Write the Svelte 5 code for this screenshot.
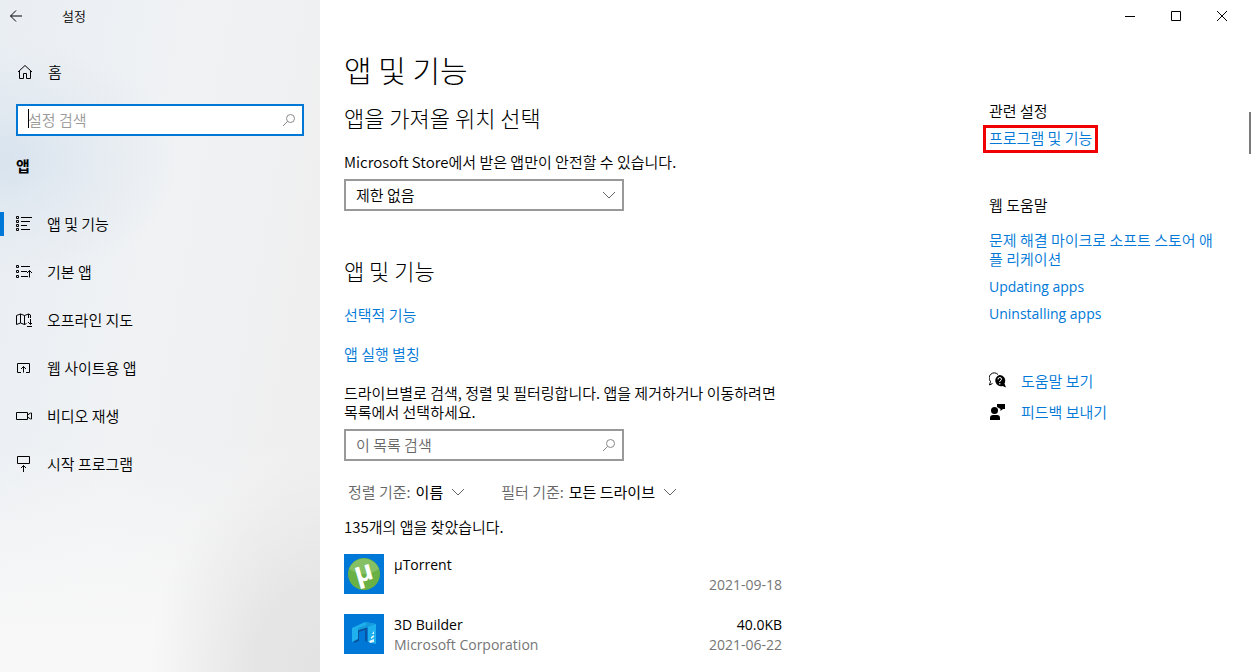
<script lang="ts">
  let settingQuery = $state('');
  let listQuery = $state('');
  let source = $state('제한 없음');
  let sortBy = $state('이름');
  let drive = $state('모든 드라이브');
  let current = $state('apps');

  const navItems = [
    { id: 'apps', label: '앱 및 기능' },
    { id: 'defaults', label: '기본 앱' },
    { id: 'maps', label: '오프라인 지도' },
    { id: 'websites', label: '웹 사이트용 앱' },
    { id: 'video', label: '비디오 재생' },
    { id: 'startup', label: '시작 프로그램' }
  ];

  const apps = [
    { id: 'utorrent', name: 'µTorrent', publisher: '', size: '', date: '2021-09-18' },
    { id: 'builder', name: '3D Builder', publisher: 'Microsoft Corporation', size: '40.0KB', date: '2021-06-22' }
  ];
</script>

{#snippet chevron()}
  <svg class="chevron" width="14" height="14" viewBox="0 0 14 14" aria-hidden="true">
    <path d="M1 4l6 6 6-6" />
  </svg>
{/snippet}

{#snippet magnifier()}
  <svg class="magnifier" width="14" height="14" viewBox="0 0 14 14" aria-hidden="true">
    <circle cx="8.5" cy="5.5" r="4" />
    <path d="M5.6 8.4L1 13" />
  </svg>
{/snippet}

<div class="window">
  <aside class="sidebar">
    <header class="titlebar">
      <button class="back" aria-label="뒤로">
        <svg width="14" height="14" viewBox="0 0 14 14"><path d="M13 7H1.5M7 1.5L1.5 7 7 12.5" /></svg>
      </button>
      <span>설정</span>
    </header>

    <a class="home" href="#home">
      <svg width="16" height="16" viewBox="0 0 16 16"><path d="M1 8l7-6.5L15 8M2.5 7v7.5h4V9.5h3v5h4V7" /></svg>
      <span>홈</span>
    </a>

    <div class="search">
      <input type="text" aria-label="설정 검색" placeholder="설정 검색" bind:value={settingQuery} />
      <span class="caret"></span>
      {@render magnifier()}
    </div>

    <h2 class="group">앱</h2>

    <nav>
      {#each navItems as item}
        <a href="#{item.id}" class:active={current === item.id} onclick={() => (current = item.id)}>
          <svg width="16" height="16" viewBox="0 0 16 16" aria-hidden="true">
            {#if item.id === 'apps'}
              <path d="M.5.5h2v2h-2zM.5 4.5h2v2h-2zM.5 8.5h2v2h-2zM.5 12.5h2v2h-2zM5 1.5h11M5 5.5h9M5 9.5h6M5 13.5h9" />
            {:else if item.id === 'defaults'}
              <path d="M.5 1.5h2v2h-2zM.5 6.5h2v2h-2zM.5 11.5h2v2h-2zM5 2.5h9M5 7.5h6M5 12.5h7M13.5 13.5v-7M11 9l2.5-2.5L16 9" />
            {:else if item.id === 'maps'}
              <path d="M.5 3.500l4-1.500 4 1.500 4-1.500 2 1v3M.5 3.500v9l4-1.500 4 1.500 2-1M4.500 2v9M8.500 3.500v9M12.500 2v4M14.500 7v5.500M12 10l2.500 2.500L16 11M11 14.500h5" />
            {:else if item.id === 'websites'}
              <path d="M5 12.5H1.5v-9h12v9H10M7.5 12.5v-6M5 9l2.5-2.5L10 9" />
            {:else if item.id === 'video'}
              <path d="M.5 4.5h11v7H.5zM11.5 7l3-2h1v6h-1l-3-2" />
            {:else}
              <path d="M1.5.5h12v7h-12zM7.5 16V9.5M5 12l2.5-2.5L10 12" />
            {/if}
          </svg>
          <span>{item.label}</span>
        </a>
      {/each}
    </nav>
  </aside>

  <div class="page">
    <header class="controls">
      <button aria-label="최소화"><svg width="12" height="12" viewBox="0 0 12 12"><path d="M1 6.5h10" /></svg></button>
      <button aria-label="최대화"><svg width="12" height="12" viewBox="0 0 12 12"><path d="M1.5 1.5h9v9h-9z" /></svg></button>
      <button aria-label="닫기"><svg width="12" height="12" viewBox="0 0 12 12"><path d="M1 1l10 10M11 1L1 11" /></svg></button>
    </header>

    <div class="columns">
      <main>
        <h1>앱 및 기능</h1>

        <section>
          <h2>앱을 가져올 위치 선택</h2>
          <label class="source-label" for="source">Microsoft Store에서 받은 앱만이 안전할 수 있습니다.</label>
          <div class="field">
            <select id="source" bind:value={source}>
              <option>제한 없음</option>
            </select>
            {@render chevron()}
          </div>
        </section>

        <section class="features">
          <h2>앱 및 기능</h2>
          <a class="option" href="#optional">선택적 기능</a>
          <a class="option" href="#aliases">앱 실행 별칭</a>
          <label class="hint" for="list-search">
            드라이브별로 검색, 정렬 및 필터링합니다. 앱을 제거하거나 이동하려면 목록에서 선택하세요.
          </label>
          <div class="field">
            <input id="list-search" type="text" placeholder="이 목록 검색" bind:value={listQuery} />
            {@render magnifier()}
          </div>

          <div class="filters">
            <label>
              정렬 기준:
              <select bind:value={sortBy}><option>이름</option></select>
              {@render chevron()}
            </label>
            <label>
              필터 기준:
              <select bind:value={drive}><option>모든 드라이브</option></select>
              {@render chevron()}
            </label>
          </div>

          <p class="count">135개의 앱을 찾았습니다.</p>

          <ul class="apps">
            {#each apps as app}
              <li>
                <svg class="logo" width="40" height="40" viewBox="0 0 40 40" aria-hidden="true">
                  <rect width="40" height="40" fill="#0078d7" />
                  {#if app.id === 'utorrent'}
                    <circle cx="20" cy="20" r="16" fill="#69b045" />
                    <path d="M5 15a16 16 0 0 1 30 0q-15 10-30 0z" fill="#85c064" />
                    <text x="20" y="27" text-anchor="middle" transform="rotate(-16 20 20)">µ</text>
                  {:else}
                    <path d="M9 15l13-4v16l-2-1V15l-6 2v9l-5 2z" fill="#0a55a0" transform="translate(1 1)" />
                    <path d="M8 14l13-6 11 2v20l-8-2V13l-10 3v9l-6 3z" fill="#1fb0ee" />
                    <path d="M21 8l11 2-8 3-10 3v-2l8-3z" fill="#159bdc" />
                    <path d="M25 27l5-2v3l-4 1zM27 23l3-2v2l-3 2zM28 20l2-3v3z" fill="#e4f6ff" />
                  {/if}
                </svg>
                <div class="info">
                  <span>{app.name}</span>
                  <span class="muted">{app.publisher}</span>
                </div>
                <div class="meta">
                  <span>{app.size}</span>
                  <span class="muted">{app.date}</span>
                </div>
              </li>
            {/each}
          </ul>
        </section>
      </main>

      <aside class="related">
        <h3>관련 설정</h3>
        <a class="marked" href="#programs">프로그램 및 기능</a>

        <h3 class="web">웹 도움말</h3>
        <a href="#troubleshoot">문제 해결 마이크로 소프트 스토어 애플 리케이션</a>
        <a class="latin" href="#updating">Updating apps</a>
        <a class="latin" href="#uninstalling">Uninstalling apps</a>

        <div class="support">
          <a href="#help">
            <svg width="18" height="18" viewBox="0 0 18 18" aria-hidden="true">
              <path d="M3.500 11.500L.5 13l1-3.500A5 5 0 0 1 9 2.500" fill="none" stroke="#000" />
              <path d="M10.500 3a5.700 5.700 0 0 1 5 8.500l1.500 4-3.500-1.500a5.700 5.700 0 1 1-3-11z" />
              <path d="M9 7.500q0-2 1.800-2t1.700 1.700q0 1-1.700 1.900V10M10.800 11v1.500" fill="none" stroke="#fff" />
            </svg>
            도움말 보기
          </a>
          <a href="#feedback">
            <svg width="18" height="18" viewBox="0 0 18 18" aria-hidden="true">
              <circle cx="5.500" cy="7.500" r="3.500" />
              <path d="M1 17v-2q0-3 3-3h4q3 0 3 3v2zM8 1h8v5h-2l-2.500 2V6L8 4z" />
            </svg>
            피드백 보내기
          </a>
        </div>
      </aside>
    </div>
    <div class="scrollbar"></div>
  </div>
</div>

<style>
  :global(body) {
    margin: 0;
    background: #fff;
  }

  .window {
    display: flex;
    min-height: 100vh;
    font: 350 15px/20px 'Noto Sans CJK KR', sans-serif;
    color: #000;
  }

  .window * {
    box-sizing: border-box;
  }

  h1, h2, h3, p, ul {
    margin: 0;
    padding: 0;
    font-weight: inherit;
  }

  a {
    color: #0078d7;
    text-decoration: none;
  }

  button, input, select {
    font: inherit;
    color: inherit;
    border: none;
    background: none;
    padding: 0;
    margin: 0;
    border-radius: 0;
    outline: none;
    appearance: none;
  }

  svg {
    flex: none;
  }

  /* Sidebar */
  .sidebar {
    width: 320px;
    flex: none;
    background:
      radial-gradient(ellipse 180px 120px at 0 160px, #d8e3ee, #d8e3ee80 40%, #d8e3ee00),
      radial-gradient(ellipse 170px 220px at 100% 100%, #e3e3e3, #e3e3e3e0 40%, #e3e3e300),
      linear-gradient(#f8f8f800 66%, #f8f8f8 94%),
      linear-gradient(100deg, #e9eef3 0%, #f0f2f4 45%, #efeeee 100%);
  }

  .sidebar svg, .controls svg {
    fill: none;
    stroke: #000;
  }

  .titlebar {
    display: flex;
    align-items: center;
    height: 32px;
    font-size: 13px;
  }

  .back {
    display: flex;
    width: 62px;
    padding-left: 9px;
  }

  .home {
    display: flex;
    align-items: center;
    gap: 15px;
    height: 48px;
    margin-top: 16px;
    padding-left: 17px;
    color: #000;
  }

  .search {
    position: relative;
    margin: 8px 16px 0;
  }

  .search input {
    display: block;
    width: 100%;
    height: 32px;
    padding: 0 32px 2px 10px;
    border: 2px solid #0078d7;
    background: #fff;
  }

  .search input::placeholder {
    color: #999;
    opacity: 1;
  }

  .caret {
    position: absolute;
    left: 12px;
    top: 5px;
    width: 1px;
    height: 19px;
    background: #000;
  }

  .magnifier, .field .chevron {
    position: absolute;
    right: 8px;
    top: 9px;
    pointer-events: none;
  }

  .sidebar .magnifier, .magnifier {
    fill: none;
    stroke: #888;
  }

  .group {
    margin: 20px 16px 24px;
    font-size: 15px;
    font-weight: 700;
  }

  nav {
    padding-top: 12px;
  }

  nav a {
    display: flex;
    align-items: center;
    gap: 15px;
    height: 24px;
    margin-bottom: 24px;
    padding-left: 12px;
    border-left: 4px solid transparent;
    color: #000;
  }

  nav a.active {
    border-color: #0078d7;
  }

  /* Main area */
  .page {
    position: relative;
    flex: 1;
    min-width: 0;
  }

  .controls {
    display: flex;
    justify-content: flex-end;
    padding-right: 8px;
  }

  .controls button {
    display: flex;
    align-items: center;
    justify-content: center;
    width: 46px;
    height: 32px;
  }

  .columns {
    display: flex;
    justify-content: space-between;
  }

  main {
    width: 480px;
    padding: 15px 0 16px 24px;
  }

  h1 {
    font-size: 30px;
    font-weight: 300;
    line-height: 44px;
  }

  main h2 {
    font-size: 22px;
    font-weight: 300;
    line-height: 32px;
    padding-top: 10px;
  }

  .source-label {
    display: block;
    margin: 19px 0 7px;
  }

  .field {
    position: relative;
    width: 280px;
  }

  .field select, .field input {
    display: block;
    width: 100%;
    height: 32px;
    padding: 0 32px 2px 10px;
    border: 2px solid #999;
    background: #fff;
  }

  .field select {
    padding-bottom: 0;
  }

  .field input::placeholder {
    color: #666;
    opacity: 1;
  }

  .chevron {
    fill: none;
    stroke: #666;
  }

  .features {
    margin-top: 33px;
  }

  .option {
    display: block;
    width: fit-content;
    margin-top: 19px;
  }

  .hint {
    display: block;
    margin: 19px 0 8px;
    line-height: 19px;
    word-break: keep-all;
  }

  .filters {
    display: flex;
    gap: 36px;
    margin: 21px 0 15px;
    padding-left: 4px;
    color: #666;
  }

  .filters label {
    display: flex;
    align-items: center;
    gap: 5px;
  }

  .filters select {
    field-sizing: content;
    height: 20px;
    color: #000;
    font-weight: 400;
  }

  .filters .chevron {
    margin-left: 3px;
  }

  .apps {
    display: grid;
    gap: 20px;
    margin-top: 17px;
    padding-right: 18px;
    list-style: none;
    font-family: 'Open Sans', sans-serif;
    font-size: 14px;
    font-weight: 400;
  }

  .apps li {
    display: flex;
    gap: 10px;
    height: 40px;
  }

  .logo {
    overflow: visible;
  }

  .logo text {
    font: 700 28px 'Open Sans', sans-serif;
    fill: #fff;
  }

  .info, .meta {
    display: grid;
    grid-template-rows: 20px 20px;
    padding-top: 1px;
  }

  .meta {
    margin-left: auto;
    text-align: right;
  }

  .muted {
    color: #767676;
  }

  /* Related links */
  .related {
    display: flex;
    flex-direction: column;
    align-items: flex-start;
    width: 264px;
    padding: 69px 28px 0 0;
    line-height: 19px;
  }

  h3 {
    font-size: 15px;
  }

  .related a {
    margin-bottom: 8px;
  }

  .related a.latin {
    padding-top: 1px;
    margin-bottom: 7px;
    font: 14px/19px 'Open Sans', sans-serif;
  }

  .related a.marked {
    margin: 5px 0 0 -6px;
    padding: 0 3px 3px;
    border: 3px solid #f00000;
  }

  h3.web {
    margin: 42px 0 16px;
  }

  .support {
    margin-top: 41px;
  }

  .support a {
    display: flex;
    align-items: center;
    gap: 14px;
    margin-bottom: 12px;
  }

  .scrollbar {
    position: absolute;
    top: 112px;
    right: 2px;
    width: 2px;
    height: 42px;
    background: #7a7a7a;
  }
</style>
